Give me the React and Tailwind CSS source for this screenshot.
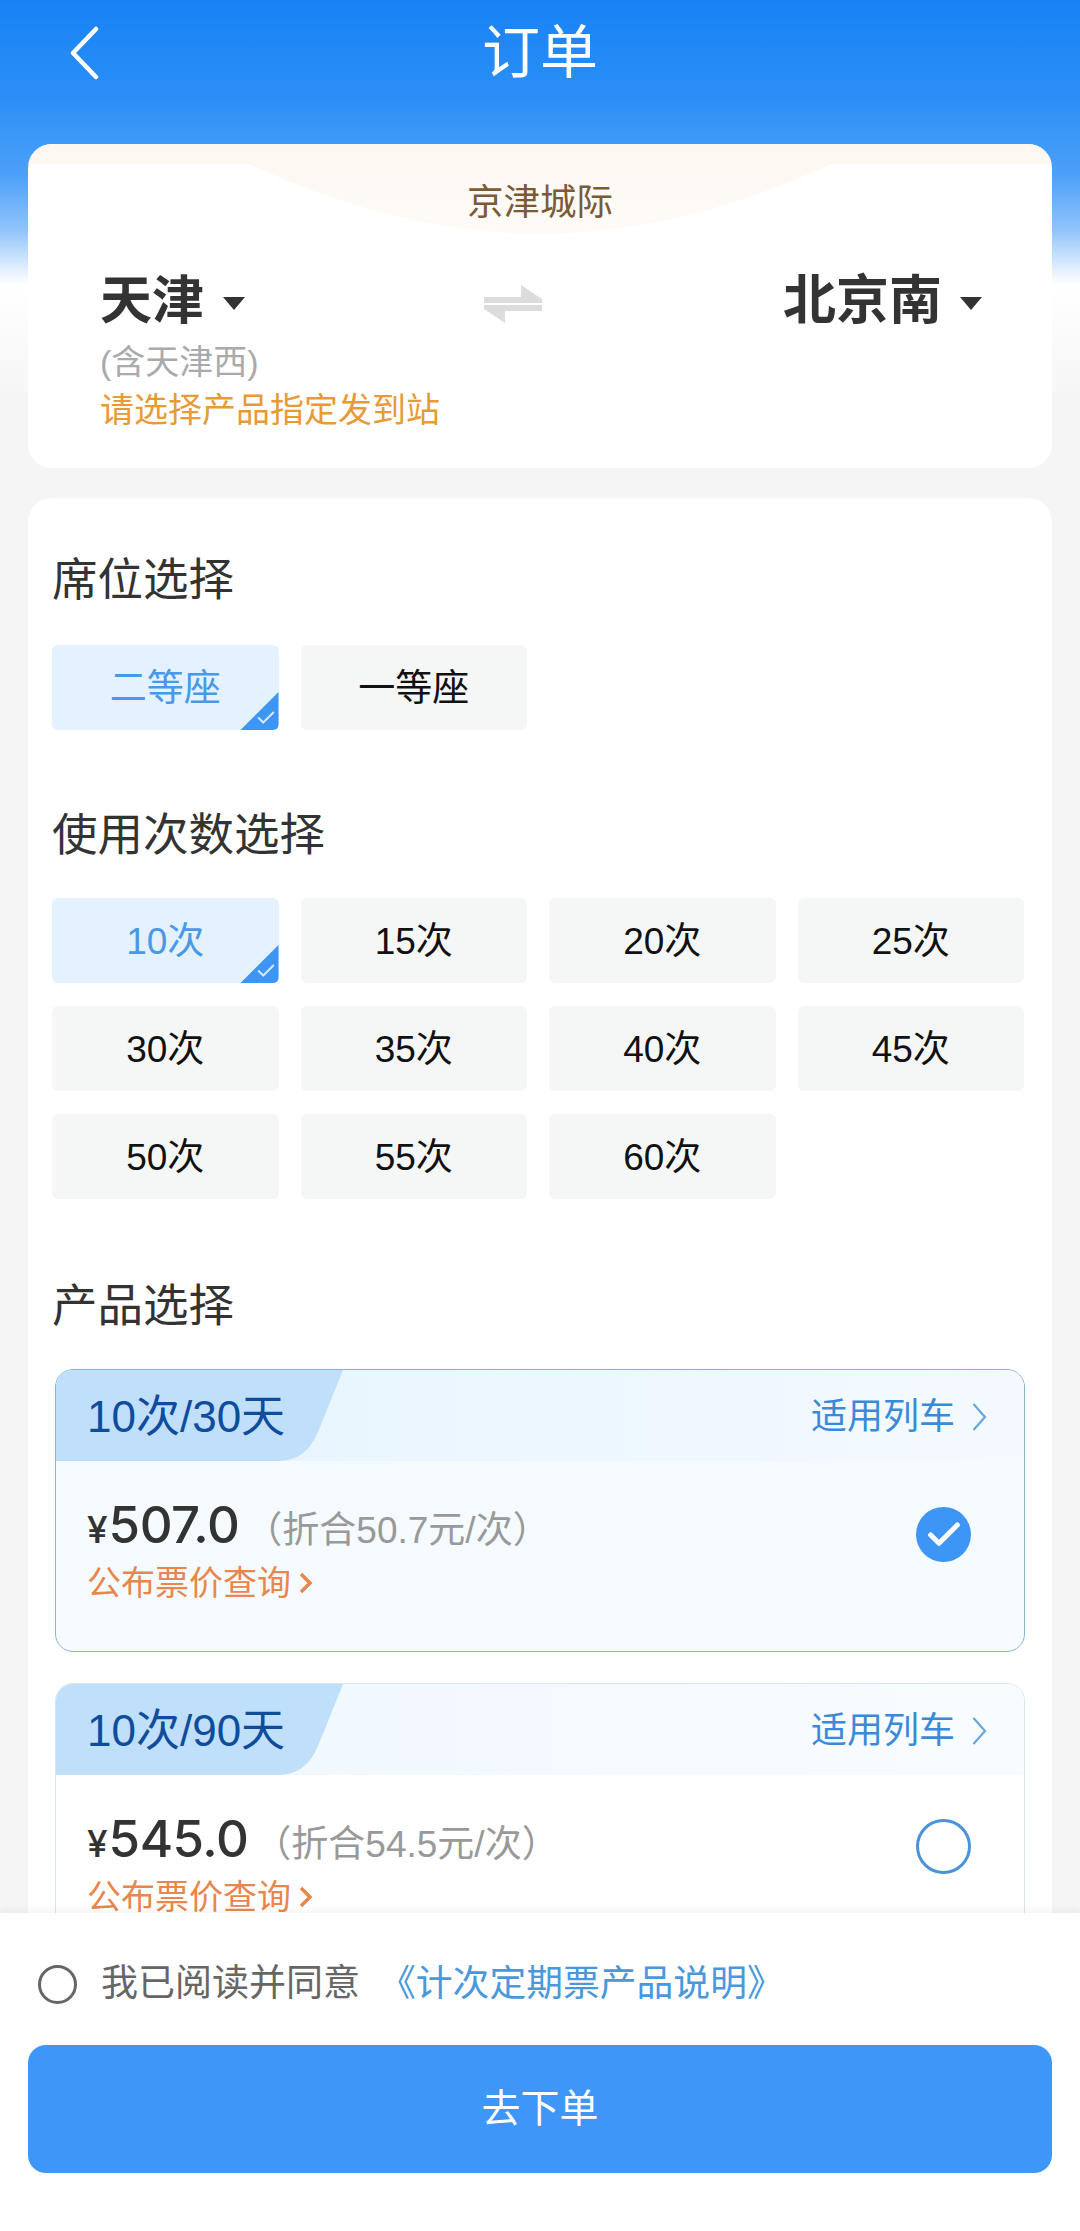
import { Check } from 'lucide-react';

const cjk = 'font-["Liberation_Sans","Noto_Sans_CJK_SC",sans-serif]';

function Caret() {
  return <span className="mt-[5px] w-0 h-0 border-x-[11px] border-x-transparent border-t-[13px] border-t-[#333]" />;
}

function SwapIcon() {
  return (
    <svg width="58" height="38" viewBox="0 0 58 38" fill="#dcdcdc">
      <path d="M37 0 L58 14 L58 18 L0 18 L0 12 L37 12 Z" />
      <path d="M0 20 L58 20 L58 26 L21 26 L21 38 L0 24 Z" />
    </svg>
  );
}

function OptionButton({ label, selected }) {
  return (
    <div
      className={`relative h-[85px] rounded-md flex items-center justify-center pt-[3px] text-[37px] overflow-hidden ${
        selected ? 'bg-[#e4f1fe] text-[#4a98e8]' : 'bg-[#f5f7f7] text-[#111]'
      }`}
    >
      {label}
      {selected && (
        <>
          <span className="absolute right-0 bottom-0 w-[38px] h-[38px] bg-[#3d96f5] [clip-path:polygon(100%_0,100%_100%,0_100%)]" />
          <Check className="absolute right-[2px] bottom-[1px] w-[22px] h-[22px] text-[#d5e8fc]" strokeWidth={2.2} />
        </>
      )}
    </div>
  );
}

function SectionTitle({ children, className }) {
  return <h3 className={`text-[45.5px] leading-[56px] text-[#333] font-normal ${className}`}>{children}</h3>;
}

function ProductCard({ name, price, per, active, perClass }) {
  return (
    <div
      className={`ml-[3px] mr-[-1px] h-[283px] shrink-0 rounded-[18px] border overflow-hidden ${
        active
          ? 'border-[#84b6d0] bg-gradient-to-b from-[#f3faff] to-[#f7fbff]'
          : 'border-[#d6e6f0] bg-white'
      }`}
    >
      <div
        className={`relative h-[91px] flex items-center justify-between pt-[3px] pl-[31px] pr-[37px] bg-gradient-to-r ${
          active ? 'from-[#e6f4fe] to-[#f4faff]' : 'from-[#eef7fe] to-[#f9fcff]'
        }`}
      >
        <svg className="absolute left-0 top-0" width="290" height="91" viewBox="0 0 290 91" fill="#bfdffb">
          <path d="M0 0 H287 L262 62 Q250 91 222 91 H0 Z" />
        </svg>
        <span className="relative text-[44px] text-[#0f4c9c]">{name}</span>
        <span className="relative flex items-center gap-[17px] text-[36px] text-[#3b8ad8]">
          适用列车
          <svg width="15" height="30" viewBox="0 0 15 30" fill="none" stroke="#6aa5dc" strokeWidth="2.2">
            <path d="M1.5 2 L13 15 L1.5 28" />
          </svg>
        </span>
      </div>
      <div className="flex items-start justify-between pl-[31px] pr-[53px] pt-[26px]">
        <div>
          <div className="flex items-baseline text-[#333] h-[66px]">
            <span className="font-['Inter',sans-serif] text-[37px] font-medium">¥</span>
            <span className="font-['Inter',sans-serif] text-[51px] font-medium ml-[1px] tracking-[-0.5px]">{price}</span>
            <span className={`text-[37px] text-[#999] ${perClass}`}>{per}</span>
          </div>
          <div className="flex items-center gap-[8px] text-[34px] leading-[30px] text-[#e8874c] mt-[15px]">
            公布票价查询
            <svg width="14" height="24" viewBox="0 0 14 24" fill="none" stroke="#e8874c" strokeWidth="3.5">
              <path d="M2 3 L11 12 L2 21" />
            </svg>
          </div>
        </div>
        {active ? (
          <span className="mt-[20px] w-[55px] h-[55px] rounded-full bg-[#3d96f5] flex items-center justify-center">
            <Check className="w-[40px] h-[40px] text-white" strokeWidth={3} />
          </span>
        ) : (
          <span className="mt-[18px] w-[55px] h-[55px] rounded-full border-[3px] border-[#4a93da]" />
        )}
      </div>
    </div>
  );
}

export default function App() {
  const counts = ['10次', '15次', '20次', '25次', '30次', '35次', '40次', '45次', '50次', '55次', '60次'];

  return (
    <div
      className={`${cjk} w-[1080px] h-[2231px] flex flex-col overflow-hidden bg-[linear-gradient(180deg,#1882f5_0px,#2b8ff7_100px,#4da0f9_175px,#8fc4fb_230px,#e8f3fe_272px,#ffffff_285px,#f5f5f5_400px)]`}
    >
      {/* Header */}
      <div className="relative h-[144px] shrink-0 flex justify-center pt-[21px]">
        <svg className="absolute left-[70px] top-[26px]" width="30" height="54" viewBox="0 0 30 54" fill="none" stroke="#ffffff" strokeWidth="4.5" strokeLinecap="round" strokeLinejoin="round">
          <path d="M26 3 L3 27 L26 51" />
        </svg>
        <h1 className="text-[58px] leading-[64px] text-white font-normal">订单</h1>
      </div>

      <div className="flex-1 min-h-0 overflow-hidden px-[28px]">
        {/* Route card */}
        <div className="relative h-[324px] rounded-[24px] bg-white overflow-hidden">
          <svg className="absolute left-0 top-0" width="1024" height="90" viewBox="0 0 1024 90">
            <defs>
              <linearGradient id="arc" x1="0" y1="0" x2="0" y2="1">
                <stop offset="0" stopColor="#fdf7f0" />
                <stop offset="1" stopColor="#fefbf8" />
              </linearGradient>
            </defs>
            <path fill="url(#arc)" d="M0 0 H1024 V20 H803 C740 50 630 90 512 90 C394 90 284 50 221 20 H0 Z" />
          </svg>
          <div className="relative text-center text-[36.5px] leading-[44px] text-[#7c5a36] pt-[37px]">京津城际</div>
          <div className="relative flex items-center justify-between pl-[72px] pr-[70px] mt-[44px] h-[64px]">
            <div className="flex items-center gap-[19px]">
              <span className="text-[52px] font-bold text-[#333]">天津</span>
              <Caret />
            </div>
            <div className="ml-[-2px] mt-[6px]">
              <SwapIcon />
            </div>
            <div className="flex items-center gap-[18px]">
              <span className="text-[53px] font-bold text-[#333]">北京南</span>
              <Caret />
            </div>
          </div>
          <div className="relative pl-[72px] mt-[7px] text-[34px] leading-[44px] text-[#aaa]">(含天津西)</div>
          <div className="relative pl-[72px] mt-[4px] text-[34px] leading-[44px] text-[#e79a35]">请选择产品指定发到站</div>
        </div>

        {/* Options card */}
        <div className="mt-[30px] rounded-t-[24px] bg-white pt-[55px] pl-[24px] pr-[28px] flex flex-col">
          <SectionTitle>席位选择</SectionTitle>
          <div className="grid grid-cols-4 gap-x-[22px] mt-[36px]">
            <OptionButton label="二等座" selected />
            <OptionButton label="一等座" />
          </div>

          <SectionTitle className="mt-[78px]">使用次数选择</SectionTitle>
          <div className="grid grid-cols-4 gap-x-[22px] gap-y-[23px] mt-[34px]">
            {counts.map((c, i) => (
              <OptionButton key={c} label={c} selected={i === 0} />
            ))}
          </div>

          <SectionTitle className="mt-[80px]">产品选择</SectionTitle>
          <div className="flex flex-col gap-[31px] mt-[34px]">
            <ProductCard name="10次/30天" price="507.0" per="（折合50.7元/次）" perClass="ml-[6px]" active />
            <ProductCard name="10次/90天" price="545.0" per="（折合54.5元/次）" perClass="ml-[6px]" />
          </div>
        </div>
      </div>

      {/* Bottom bar */}
      <div className="relative h-[318px] shrink-0 bg-white px-[28px] shadow-[0_-2px_8px_rgba(0,0,0,0.06)]">
        <div className="flex items-center h-[132px] pt-[10px] pl-[10px]">
          <span className="w-[39px] h-[39px] rounded-full border-[3px] border-[#666]" />
          <span className="ml-[24px] text-[37px] text-[#666]">我已阅读并同意</span>
          <span className="ml-[19px] text-[36.8px] text-[#4a98dc]">《计次定期票产品说明》</span>
        </div>
        <button className="w-full h-[128px] rounded-[18px] bg-[#3d96f8] text-white text-[39px]">去下单</button>
      </div>
    </div>
  );
}
